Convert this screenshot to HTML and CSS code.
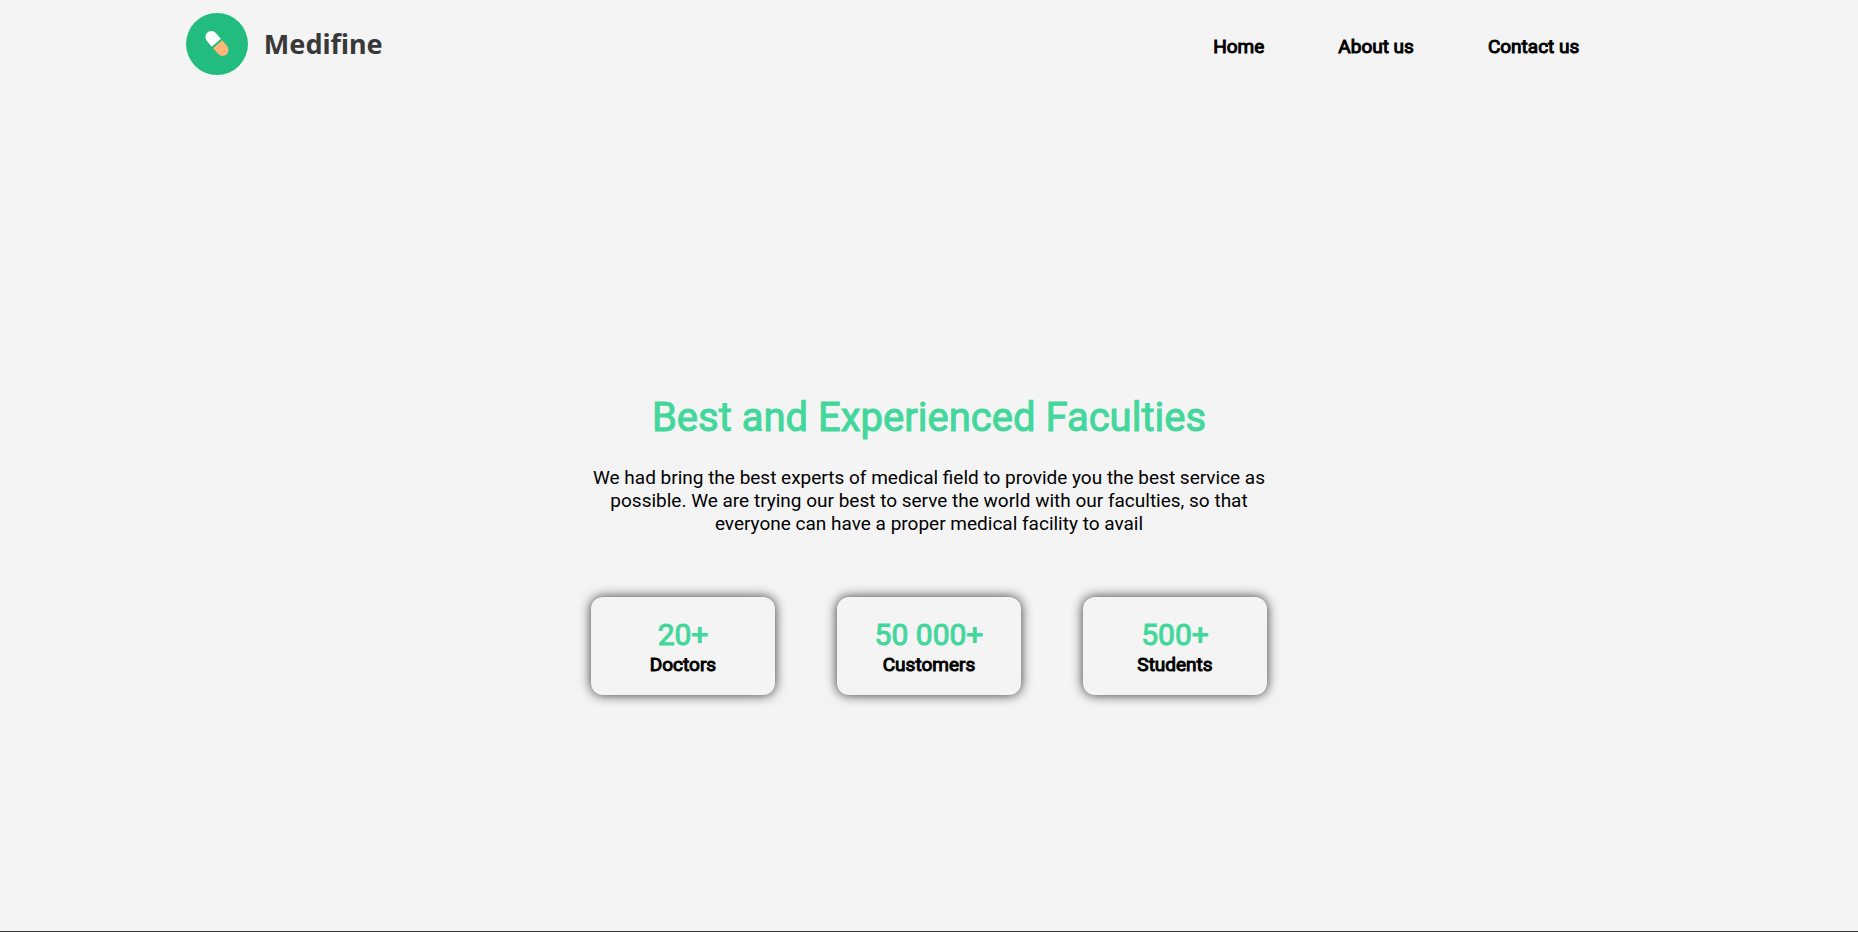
FILE: index.html
```html
<!DOCTYPE html>
<html lang="en">
<head>
<meta charset="utf-8">
<meta name="viewport" content="width=device-width, initial-scale=1">
<title>Medifine</title>
<link rel="stylesheet" href="styles.css">
</head>
<body>
<header class="header">
  <a class="brand" href="#">
    <svg class="brand-icon" viewBox="0 0 62 62" aria-hidden="true">
      <circle cx="31" cy="31" r="31" fill="#22bc7e"/>
      <g transform="translate(31 30.500) rotate(-41)">
        <path d="M-6 -1V-8.500A6 6 0 0 1 6 -8.500V-1Z" fill="#fff"/>
        <path d="M-6 1H6V8.500A6 6 0 0 1 -6 8.500Z" fill="#ffb577"/>
      </g>
    </svg>
    <span class="brand-name">Medifine</span>
  </a>
  <nav class="nav">
    <a href="#">Home</a>
    <a href="#">About us</a>
    <a href="#">Contact us</a>
  </nav>
</header>
<main class="faculties">
  <h1 class="title">Best and Experienced Faculties</h1>
  <p class="intro">We had bring the best experts of medical field to provide you the best service as possible. We are trying our best to serve the world with our faculties, so that everyone can have a proper medical facility to avail</p>
  <ul class="stats">
    <li class="stat"><strong class="stat-value">20+</strong><span class="stat-label">Doctors</span></li>
    <li class="stat"><strong class="stat-value">50 000+</strong><span class="stat-label">Customers</span></li>
    <li class="stat"><strong class="stat-value">500+</strong><span class="stat-label">Students</span></li>
  </ul>
</main>
</body>
</html>
```
FILE: styles.css
```css
* {
  box-sizing: border-box;
  margin: 0;
  padding: 0;
}

body {
  display: flex;
  flex-direction: column;
  min-height: 100vh;
  border-bottom: 1px solid #3b3b3b;
  background: #f4f4f4;
  color: #000;
  font-family: Roboto, sans-serif;
  font-size: 19px;
  line-height: 23px;
}

a {
  color: inherit;
  text-decoration: none;
}

.header {
  display: flex;
  align-items: center;
  justify-content: space-between;
  padding: 13px 15% 13px 10%;
}

.brand {
  display: flex;
  align-items: center;
  gap: 16px;
}

.brand-icon {
  width: 62px;
  height: 62px;
}

.brand-name {
  color: #383838;
  font-family: "Noto Sans", sans-serif;
  font-size: 27px;
  font-weight: 700;
  line-height: 32px;
}

.nav {
  display: flex;
  gap: 74px;
  padding-top: 5px;
  -webkit-text-stroke: 1px;
}

.faculties {
  flex: 1;
  display: flex;
  flex-direction: column;
  align-items: center;
  justify-content: center;
  padding: 70px 16px 0;
  text-align: center;
}

.title {
  color: #43d79c;
  font-size: 40px;
  font-weight: 400;
  line-height: 47px;
  -webkit-text-stroke: 1px;
}

.intro {
  max-width: 676px;
  margin: 25px 0 62px;
}

.stats {
  display: flex;
  flex-wrap: wrap;
  justify-content: center;
  gap: 62px;
  list-style: none;
}

.stat {
  display: flex;
  flex-direction: column;
  width: 184px;
  padding: 20px 8px 19px;
  border-radius: 12px;
  box-shadow: 0 0 12px #333;
}

.stat-value {
  color: #43d79c;
  font-size: 30px;
  font-weight: 400;
  line-height: 36px;
  -webkit-text-stroke: 1px;
}

.stat-label {
  -webkit-text-stroke: 1px;
}
```
